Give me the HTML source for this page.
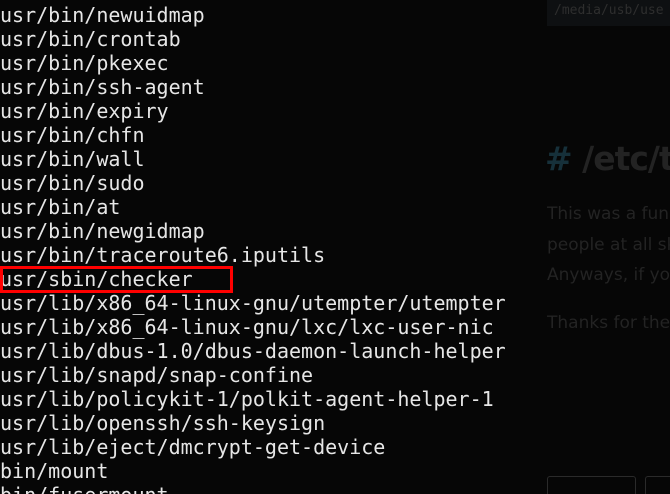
<!DOCTYPE html>
<html><head><meta charset="utf-8"><style>
html,body{margin:0;padding:0;width:670px;height:494px;overflow:hidden;background:#060606;position:relative;}
#term{position:absolute;left:0;top:3px;font-family:"DejaVu Sans Mono","Liberation Mono",monospace;font-size:20px;line-height:24px;color:#e6e6e6;white-space:pre;}
#box{position:absolute;left:0;top:266px;width:227px;height:21px;border:3px solid #f00;}
.r{position:absolute;font-family:"DejaVu Sans","Liberation Sans",sans-serif;color:#232323;white-space:nowrap;overflow:hidden;}
#code{position:absolute;left:547px;top:0;width:123px;height:26px;background:#0e1012;overflow:hidden;}
#code span{position:absolute;left:7px;top:3px;font-family:"DejaVu Sans Mono",monospace;font-size:13px;color:#2e2e2e;white-space:nowrap;}
.tag{position:absolute;top:476px;height:30px;border:1px solid #2a2a2a;border-radius:3px;box-sizing:border-box;}
</style></head><body>
<div id="term">usr/bin/newuidmap
usr/bin/crontab
usr/bin/pkexec
usr/bin/ssh-agent
usr/bin/expiry
usr/bin/chfn
usr/bin/wall
usr/bin/sudo
usr/bin/at
usr/bin/newgidmap
usr/bin/traceroute6.iputils
usr/sbin/checker
usr/lib/x86_64-linux-gnu/utempter/utempter
usr/lib/x86_64-linux-gnu/lxc/lxc-user-nic
usr/lib/dbus-1.0/dbus-daemon-launch-helper
usr/lib/snapd/snap-confine
usr/lib/policykit-1/polkit-agent-helper-1
usr/lib/openssh/ssh-keysign
usr/lib/eject/dmcrypt-get-device
bin/mount
bin/fusermount</div>
<div id="box"></div>
<div id="code"><span>/media/usb/use</span></div>
<div class="r" style="left:545px;top:139px;width:125px;font-size:33px;font-weight:bold;letter-spacing:-1px;"><span style="color:#16303a">#</span>&nbsp;/etc/tab</div>
<div class="r" style="left:547px;top:199px;width:123px;font-size:17px;line-height:30.5px;">This was a fun<br>people at all sk<br>Anyways, if you</div>
<div class="r" style="left:547px;top:313px;width:123px;font-size:17px;">Thanks for the</div>
<div class="tag" style="left:547px;width:89px;"></div>
<div class="tag" style="left:645px;width:25px;border-right:none;border-radius:3px 0 0 3px;"></div>
</body></html>
